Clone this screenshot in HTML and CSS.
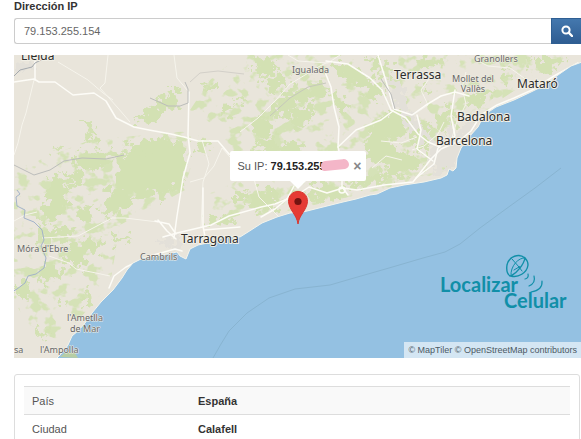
FILE: index.html
```html
<!DOCTYPE html>
<html lang="es">
<head>
  <meta charset="UTF-8">
  <meta name="viewport" content="width=device-width, initial-scale=1">
  <title>Localizar IP</title>
  <link rel="stylesheet" href="styles.css">
</head>
<body>
  <main class="page">
    <form class="search">
      <label for="ip">Dirección IP</label>
      <div class="input-group">
        <input type="text" id="ip" value="79.153.255.154">
        <button type="button" aria-label="Buscar">
          <svg viewBox="0 0 12 12" width="12" height="12" aria-hidden="true">
            <circle cx="5" cy="5" r="3.6" fill="none" stroke="#fff" stroke-width="2"/>
            <path d="M7.7 7.7L11 11" stroke="#fff" stroke-width="2.4" stroke-linecap="round"/>
          </svg>
        </button>
      </div>
    </form>

    <div class="map">
      <svg class="map-canvas" viewBox="14 55 567 303" preserveAspectRatio="xMidYMid slice">
        <defs>
          <filter id="rough" x="-5%" y="-5%" width="110%" height="110%">
            <feTurbulence type="fractalNoise" baseFrequency="0.13" numOctaves="3" seed="4"/>
            <feDisplacementMap in="SourceGraphic" scale="26" xChannelSelector="R" yChannelSelector="G"/>
          </filter>
          <!-- keeps only scattered patches of the shape it is put on -->
          <filter id="scatter" x="0" y="0" width="100%" height="100%">
            <feTurbulence type="fractalNoise" baseFrequency="0.07 0.09" numOctaves="3" seed="9"/>
            <feColorMatrix values="0 0 0 0 0  0 0 0 0 0  0 0 0 0 0  9 0 0 0 -4.8"/>
            <feComposite in="SourceGraphic" operator="in"/>
          </filter>
        </defs>
        <rect x="14" y="55" width="567" height="303" fill="#e9e5db"/>

        <!-- woods -->
        <path filter="url(#scatter)" fill="#d5e2b7" d="M240 55H570L500 100L470 130L450 170L380 190L270 215L240 215L210 225L206 195L240 180L222 130L190 110L210 80ZM14 170L90 140L200 130L185 190L120 225L110 285L60 340L30 330L14 300Z"/>
        <g filter="url(#rough)" fill="#d3e1b3">
          <path d="M120 158l20-11 26-4 18 2 3 22-4 18-16 8-24 2-22 5-4-18z"/>
          <path d="M108 188l16 4 8 9-10 12-16 2-4-10z"/>
          <path d="M77 154l18-2 16 2 12-5 2 8-16 4-12 8-14 2-8-6z"/>
          <path d="M124 149l18-9 26-2 16 6-30 6-24 6z"/>
          <path d="M48 176l16 4 6 10-4 16-10 12-10 4-6-10 8-14z"/>
          <path d="M66 170l16 4 2 10-14 4z"/>
          <path d="M78 208l12-2 2 10-8 6-8-4z"/>
          <path d="M38 228l20 2 16-4 2 10-14 2-22 6z"/>
          <path d="M72 246l16-8 16 2-6 10-10 4-4 12-14 0-6-10z"/>
          <path d="M44 262l14 4 8 10-12 2-8 6-6-8z"/>
          <path d="M16 282l12-2 2 14-8 6-6-8z"/>
          <path d="M112 239l16-4 6 5-18 4z"/>
          <path d="M84 293l8 2-4 12-6-2z"/>
          <path d="M54 301l10-1 2 5-10 1zM38 330l8-1 2 6-8 3z"/>
          <path d="M134 120l16-14 10-4 8-12 10 0 2 14-16 8-8 8-12 4z"/>
          <path d="M86 120l6 4 6 14-6 2-6-12zM52 148l8-3 2 5-8 2z"/>
          <path d="M156 196l8-6 4 8-8 6z"/>
          <path d="M204 84l12-1 0 8-10 0zM222 107l14-2-4 8-10 2zM238 98l8 1-2 4-8-1z"/>
          <path d="M256 60l14-3 8 6-4 10-12 6-6-8z"/>
          <path d="M264 82l14-6 16 4-12 8-16 5z"/>
          <path d="M276 100l18-12 24-5 12 5-8 9-22 6-12 13-12 2z"/>
          <path d="M250 120l12-4 12 8 0 12-12 4-12-8z"/>
          <path d="M294 112l18-6 2 9-16 13-10-3z"/>
          <path d="M250 142l16-2 16 6 16-6 8 8-12 6-28-2z"/>
          <path d="M332 62l18 2 14 10 14 8 6 14-10 4-12-10-12-8-12-4z"/>
          <path d="M334 93l10 7 2 14-8-4z"/>
          <path d="M366 58l16 0 10 12 0 8-12-4z"/>
          <path d="M370 124l14-9 18-4 8 4-4 14-10 9-16 2-8 6-6-8z"/>
          <path d="M410 122l10-3 12 5-4 12 4 9-10 9-8-12z"/>
          <path d="M438 110l12-5 7 6-4 11-10 10-8-10z"/>
          <path d="M420 84l8 2 6 9-8 2zM418 58l16-2 14 7-16 6-10-4z"/>
          <path d="M466 100l12-8 14-2 4 6-14 7-12 4z"/>
          <path d="M502 72l6-4 2 16-6 4zM530 58l26 0 12 1-20 13-16-2z"/>
          <path d="M364 140l18-2 16 8-4 14-14 5-12-8z"/>
          <path d="M386 158l14-7 14 4 8 8-12 12-16 4-10-10z"/>
          <path d="M256 192l16-6 10 10-6 12-20 4-8-6zM236 190l12 2-2 8-10 0z"/>
          <path d="M208 218l14-2 16 5-14 4-14-1z"/>
          <path d="M309 186l16-2 20 4-6 10-20 4-6-4z"/>
          <path d="M194 142l14 0-4 8-8-1zM344 182l18-4 16-8 12 7-12 7-18 4z"/>
        </g>

        <!-- built-up areas -->
        <g filter="url(#rough)" fill="#e3e0d9">
          <path d="M388 76l12 6 8 26 16 20 12 14-8 6-16-18-20-30z"/>
          <path d="M440 140l34-24 6 8-14 20-12 24-20 6-6-20z"/>
          <path d="M160 234l12-2 10 8-8 12-8-4zM15 64l16-4 4 8-18 6z"/>
        </g>

        <!-- minor roads -->
        <g fill="none" stroke="#f6f4ec" stroke-width="1">
          <path d="M108 55l-3 28-5 5 18 20 12 14"/>
          <path d="M58 62l30 18 15 13 10 7"/>
          <path d="M34 80l-8 33-4 12-4 18-4 12"/>
          <path d="M174 55l3 23 11 13"/>
          <path d="M202 140l7 24-6 18-2 45"/>
          <path d="M222 148l-8 18-10 12-14 4"/>
          <path d="M222 148l15 17 17 14 5 18 20 20"/>
          <path d="M49 256l20 7 7 6 20 4 14 3"/>
          <path d="M14 221l11-6 12-3"/>
          <path d="M42 238l36-2 34-18 13 0 33 4"/>
          <path d="M340 55l-12 8-30-2-10-6"/>
          <path d="M434 72l-13 18 7 15-15 10"/>
          <path d="M476 60l12 6 22 2 14 10 4 8"/>
          <path d="M466 72l-4 16 4 16-10 20-4 14"/>
          <path d="M412 150l12-4 14-12 6-12"/>
          <path d="M381 141l20 2 16-6M372 168l14-12 16 4"/>
          <path d="M334 180l6-15 6-12"/>
          <path d="M240 132l18-14 18-18 14-16 30-18 8-4"/>
        </g>

        <!-- main roads -->
        <g fill="none" stroke="#fdfcf7" stroke-width="1.5" stroke-linejoin="round" stroke-linecap="round">
          <path d="M14 82l20-3 5 3 16 0 18 13 21-2 12 8 10 17 18 9 15 3 22 4 13 3 14 4 20 0 11 13 8 2"/>
          <path d="M35 55l0 25M189 92l-1 43 2 18-7 25-6 38-3 22"/>
          <path d="M325 72l6 15 3 20 5 20-1 20 4 16 0 24 6 8"/>
          <path d="M326 61l22 3 22 14 12 12 9 20 15 8 12 16 10 8 12 5"/>
          <path d="M378 55l8 26 8 28 18 6 14-10 15-9 14-4 14 4"/>
          <path d="M338 147l18-17 25-10 12-9"/>
          <path d="M417 115l4 15-4 19 16 12"/>
          <path d="M455 90l-4 26 4 20-17 12-4 16-18 14"/>
          <path d="M578 63l-24 13-22 14-18 8-17 7-16 10-10 16-12 10-18 8-10 10-18 23-29 3-27 5-14-2-16 5-18-6-12 8-22 9-14 3-32 9-18 9-34 8-14 4"/>
          <path d="M204 230l36-3M203 188l0 38 3 16M109 288l5-12 12-9 24-11 25-7 7 2"/>
          <path d="M155 221l14 3 7 10M158 220l9 11 9 8"/>
          <path d="M261 217l14-8 12-10 7-13"/>
          <circle cx="342" cy="190" r="3"/>
        </g>

        <!-- rivers and railways -->
        <g fill="none" stroke="#bcbdbb" stroke-width="1">
          <path d="M14 76l6-6 12-3 3-4 8-4" stroke="#a4a9ae"/>
          <path d="M17 190l3 4-4 3 1 9 8 4-1 8 10 4 8 8 2 10-3 6 5 12-2 10-8 6-8 2-3 7-8 6-5 3" stroke="#a3b3ca"/>
          <path d="M14 165l12 6 8 4 16-5 14-9 18-3 24 1 18-4"/>
          <path d="M150 98l18 8 12 0 8-3 0-14-3-7"/>
          <path d="M190 82l10-9 18-2 26 3" stroke="#d3d0c9"/>
          <path d="M270 116l20-18 18-11 18-4" stroke="#c6c8bb"/>
          <path d="M381 79l10 15 4 15"/>
        </g>

        <!-- sea -->
        <path fill="#94c1e2" stroke="#f4f4ec" stroke-width="1" d="M582 62L571 66L558 75L545 85L531 92L514 100L496 107L484 115L478 127L469 137L461 148L457 158L456 168L453 171L449 169L447 175L441 178L424 182L404 185L390 188L377 194L370 195L356 199L343 202L323 207L303 212L290 213L277 217L262 223L248 232L240 237L226 236L212 242L198 245L190 249L186 259L180 256L177 252L167 254L157 256L143 258L133 263L127 270L122 278L113 290L101 302L92 313L85 323L79 330L72 336L68 345L63 352L56 359H582Z"/>
        <path d="M60 357l7-6 8 2 3 5z" fill="#b7cda4"/>
        <path d="M213 358l8-14 8-13 18-18 22-15 26-9 35-4 24-7 35-10 34-10 22-6 15-8 20-16 30-22 25-18 26-20" fill="none" stroke="#88b4d1" stroke-width="1"/>

        <g class="town">
          <text x="21" y="60" class="city">Lleida</text>
          <text x="292" y="73">Igualada</text>
          <text x="474" y="62">Granollers</text>
          <text x="473" y="82" text-anchor="middle">Mollet del</text>
          <text x="473" y="92" text-anchor="middle">Vallès</text>
          <text x="17" y="252">Móra d'Ebre</text>
          <text x="140" y="260">Cambrils</text>
          <text x="85" y="321" text-anchor="middle">l'Ametlla</text>
          <text x="85" y="332" text-anchor="middle">de Mar</text>
          <text x="40" y="353">l'Ampolla</text>
          <text x="14" y="353">sa</text>
          <text x="394" y="79" class="city">Terrassa</text>
          <text x="517" y="88" class="city">Mataró</text>
          <text x="457" y="121" class="city">Badalona</text>
          <text x="436" y="145" class="city">Barcelona</text>
          <text x="181" y="243" class="city">Tarragona</text>
        </g>

        <!-- logo -->
        <g class="logo">
          <text x="440" y="292">Localizar</text>
          <text x="504" y="308">Celular</text>
          <g fill="none" stroke="#118fa8" stroke-width="1.4" stroke-linecap="round">
            <path d="M525 258C519 253 509 256 507 265C506 271 508 276 511 276C518 278 527 273 528 265C528 262 527 260 525 258C524 264 517 273 511 276"/>
            <path d="M525 258C519 257 510 266 511 276" stroke-width="1"/>
            <path d="M512 259L519 267L522 271M519 267L514 270" stroke-width="1"/>
            <circle cx="519" cy="267" r="1" fill="#118fa8" stroke="none"/>
            <path d="M528 274q1 4-3 5M534 276q2 7-5 10M542 281q1 9-11 11" stroke-width="1.2"/>
          </g>
        </g>
      </svg>

      <div class="marker">
        <div class="popup">
          <span>Su IP: <b>79.153.255.<i class="smudge"></i></b></span>
          <button type="button" aria-label="Cerrar">×</button>
        </div>
        <svg class="pin" viewBox="0 0 20 34" width="20" height="34" aria-hidden="true">
          <path d="M10 33C9 24 1 19 0.500 10.500C0.500 4.500 4.500 0.500 10 0.500S19.500 4.500 19.500 10.500C19 19 11 24 10 33Z" fill="#e53b34" stroke="#d9362f"/>
          <circle cx="10" cy="10.500" r="3.600" fill="#721411"/>
        </svg>
      </div>

      <div class="attribution">
        <a href="#">© MapTiler</a> <a href="#">© OpenStreetMap contributors</a>
      </div>
    </div>

    <section class="panel">
      <table>
        <tr><th scope="row">País</th><td>España</td></tr>
        <tr><th scope="row">Ciudad</th><td>Calafell</td></tr>
      </table>
    </section>
  </main>
</body>
</html>
```

FILE: styles.css
```css
* {
  box-sizing: border-box;
}

body {
  margin: 0;
  font-family: "Liberation Sans", Arial, sans-serif;
  font-size: 11px;
  line-height: 16px;
  color: #555;
  background: #fff;
  overflow: hidden;
}

.page {
  padding-left: 14px;
}

.search label {
  display: block;
  padding-bottom: 5px;
  line-height: 13px;
  font-weight: bold;
  color: #333;
}

.input-group {
  display: flex;
  height: 26px;
}

.input-group input {
  flex: 1;
  min-width: 0;
  padding: 0 9px;
  border: 1px solid #ccc;
  border-right: none;
  border-radius: 3px 0 0 3px;
  font: inherit;
  color: #666;
}

.input-group button {
  display: flex;
  align-items: center;
  justify-content: center;
  width: 30px;
  padding: 0;
  border: 1px solid #2f5f93;
  border-right: none;
  background: linear-gradient(#4478ae, #2f5d92);
  cursor: pointer;
}

.map {
  position: relative;
  margin-top: 11px;
  overflow: hidden;
}

.map-canvas {
  display: block;
  width: 100%;
}

.town text {
  font-family: "Noto Sans", sans-serif;
  font-size: 9px;
  fill: #666;
  stroke: #f1efe6;
  stroke-width: 1px;
  stroke-linejoin: round;
  paint-order: stroke;
}

.town .city {
  font-size: 12px;
  fill: #2c2c2c;
  stroke-width: 2px;
}

.logo text {
  font-family: Lato, sans-serif;
  font-size: 20px;
  font-weight: bold;
  fill: #118fa8;
}

/* the pin's tip stands on the located point */
.marker {
  position: absolute;
  left: 50%;
  bottom: 44%;
  display: flex;
  flex-direction: column;
  align-items: center;
  transform: translateX(-50%);
}

.popup {
  position: relative;
  display: flex;
  align-items: center;
  justify-content: space-between;
  width: 136px;
  height: 30px;
  margin-bottom: 10px;
  padding: 0 4px 0 8px;
  border-radius: 2px;
  background: #fff;
  white-space: nowrap;
}

.popup::after {
  content: "";
  position: absolute;
  top: 100%;
  left: 50%;
  margin-left: -8px;
  border: 8px solid transparent;
  border-top-color: #fff;
  border-bottom: none;
}

.popup b {
  position: relative;
  color: #222;
}

.popup button {
  padding: 0;
  border: none;
  background: none;
  font: bold 14px "Liberation Sans", Arial, sans-serif;
  color: #888;
  cursor: pointer;
}

.smudge {
  position: absolute;
  left: 50px;
  top: 0;
  width: 28px;
  height: 10px;
  border-radius: 8px 10px 8px 6px;
  background: #f4b6c8;
  transform: rotate(-6deg);
}

.pin {
  display: block;
}

.attribution {
  position: absolute;
  right: 0;
  bottom: 0;
  padding: 0 4px;
  background: rgba(255, 255, 255, 0.6);
  font-size: 9px;
}

.attribution a {
  color: #4c5964;
  text-decoration: none;
}

.panel {
  margin: 16px 1px 0 0;
  padding: 11px 9px;
  border: 1px solid #ddd;
  border-radius: 3px;
}

table {
  width: 100%;
  border-collapse: collapse;
}

th,
td {
  height: 28px;
  padding: 4px 8px;
  border-top: 1px solid #ddd;
  text-align: left;
}

th {
  width: 166px;
  font-weight: normal;
}

td {
  font-weight: bold;
  color: #333;
}

tr:nth-child(odd) {
  background: #f9f9f9;
}
```
